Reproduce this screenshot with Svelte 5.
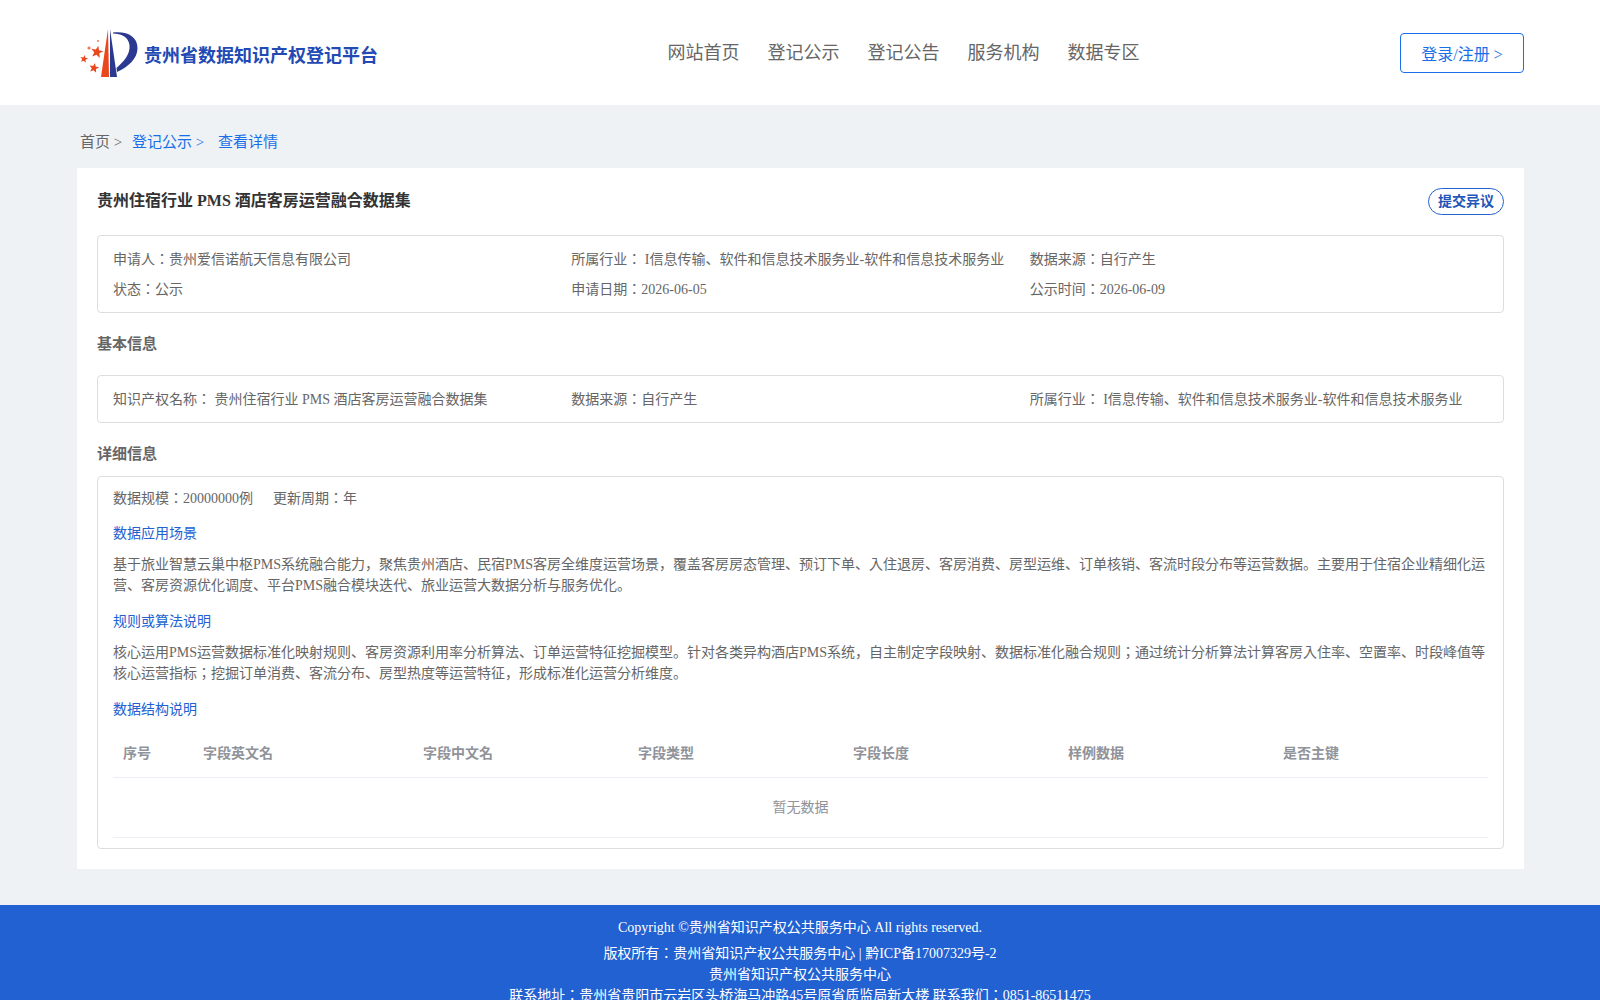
<script lang="ts">
  const navItems = ['网站首页', '登记公示', '登记公告', '服务机构', '数据专区'];
  const columns = [
    { label: '序号', width: 80 },
    { label: '字段英文名', width: 220 },
    { label: '字段中文名', width: 215 },
    { label: '字段类型', width: 215 },
    { label: '字段长度', width: 215 },
    { label: '样例数据', width: 215 },
    { label: '是否主键', width: 215 },
  ];
  const stars = [
    { x: 19, y: 25, r: 6.5 },
    { x: 6, y: 32, r: 4.2 },
    { x: 16, y: 41, r: 5.2 },
  ];

  function starPoints(cx: number, cy: number, r: number): string {
    const pts: string[] = [];
    for (let i = 0; i < 10; i++) {
      const rad = i % 2 === 0 ? r : r * 0.42;
      const a = -Math.PI / 2 + 0.2 + (i * Math.PI) / 5;
      pts.push(`${(cx + rad * Math.cos(a)).toFixed(2)},${(cy + rad * Math.sin(a)).toFixed(2)}`);
    }
    return pts.join(' ');
  }
</script>

<div class="page">
  <header class="header">
    <div class="logo">
      <svg class="logo-mark" viewBox="0 0 60 52" width="60" height="52" aria-hidden="true">
        <polygon points="30,2 31,50 23,50" fill="#e8481c" />
        <polygon points="32,2 39,50 32,50" fill="#2b3990" />
        <path d="M35 5.5 C50 4 59.5 10 59.5 21 C59.5 32 50 40 39 45 L38.5 41 C45 35 52.5 28 51.5 18 C50.5 10 43 6.5 35 6.5 Z" fill="#2b3990" />
        {#each stars as s}
          <polygon points={starPoints(s.x, s.y, s.r)} fill="#e8481c" />
        {/each}
        <circle cx="11" cy="21" r="1.6" fill="#ee7a50" />
        <circle cx="20" cy="14" r="1" fill="#ee7a50" />
      </svg>
      <span class="logo-text">贵州省数据知识产权登记平台</span>
    </div>
    <nav class="nav">
      {#each navItems as item}
        <span class="nav-item">{item}</span>
      {/each}
    </nav>
    <button class="login">登录/注册 &gt;</button>
  </header>

  <main class="main">
    <div class="crumbs">
      <span class="crumb-home">首页 &gt;</span>
      <span class="crumb-list">登记公示 &gt;</span>
      <span class="crumb-here">查看详情</span>
    </div>

    <section class="card">
      <div class="title-row">
        <h1 class="title">贵州住宿行业 PMS 酒店客房运营融合数据集</h1>
        <button class="objection">提交异议</button>
      </div>

      <div class="box summary">
        <span>申请人：贵州爱信诺航天信息有限公司</span>
        <span>所属行业： I信息传输、软件和信息技术服务业-软件和信息技术服务业</span>
        <span>数据来源：自行产生</span>
        <span>状态：公示</span>
        <span>申请日期：2026-06-05</span>
        <span>公示时间：2026-06-09</span>
      </div>

      <h2 class="section-head basic">基本信息</h2>
      <div class="box basic-box">
        <span>知识产权名称： 贵州住宿行业 PMS 酒店客房运营融合数据集</span>
        <span>数据来源：自行产生</span>
        <span>所属行业： I信息传输、软件和信息技术服务业-软件和信息技术服务业</span>
      </div>

      <h2 class="section-head detail">详细信息</h2>
      <div class="box detail-box">
        <div class="meta">
          <span>数据规模：20000000例</span>
          <span>更新周期：年</span>
        </div>
        <h3 class="sub-head">数据应用场景</h3>
        <p class="para">基于旅业智慧云巢中枢PMS系统融合能力，聚焦贵州酒店、民宿PMS客房全维度运营场景，覆盖客房房态管理、预订下单、入住退房、客房消费、房型运维、订单核销、客流时段分布等运营数据。主要用于住宿企业精细化运营、客房资源优化调度、平台PMS融合模块迭代、旅业运营大数据分析与服务优化。</p>
        <h3 class="sub-head">规则或算法说明</h3>
        <p class="para">核心运用PMS运营数据标准化映射规则、客房资源利用率分析算法、订单运营特征挖掘模型。针对各类异构酒店PMS系统，自主制定字段映射、数据标准化融合规则；通过统计分析算法计算客房入住率、空置率、时段峰值等核心运营指标；挖掘订单消费、客流分布、房型热度等运营特征，形成标准化运营分析维度。</p>
        <h3 class="sub-head">数据结构说明</h3>
        <table class="fields">
          <colgroup>
            {#each columns as col}
              <col style="width: {col.width}px" />
            {/each}
          </colgroup>
          <thead>
            <tr>
              {#each columns as col}
                <th>{col.label}</th>
              {/each}
            </tr>
          </thead>
          <tbody>
            <tr>
              <td class="empty" colspan={columns.length}>暂无数据</td>
            </tr>
          </tbody>
        </table>
      </div>
    </section>
  </main>

  <footer class="footer">
    <p class="copyright">Copyright ©贵州省知识产权公共服务中心 All rights reserved.</p>
    <p>版权所有：贵州省知识产权公共服务中心 | 黔ICP备17007329号-2</p>
    <p>贵州省知识产权公共服务中心</p>
    <p>联系地址：贵州省贵阳市云岩区头桥海马冲路45号原省质监局新大楼 联系我们：0851-86511475</p>
  </footer>
</div>

<style>
:global(body) {
  margin: 0;
  background: #eff2f5;
}

.page {
  height: 1000px;
  overflow: hidden;
  font-family: "Liberation Serif", "Noto Sans CJK JP", serif;
  font-size: 14px;
  line-height: 21px;
  color: #666;
}

.header {
  height: 105px;
  background: #fff;
  padding: 0 76px 0 80px;
  display: flex;
  align-items: center;
  justify-content: space-between;
  box-sizing: border-box;
}

.logo {
  display: flex;
  align-items: center;
  gap: 6px;
  width: 340px;
}

.logo-mark {
  flex: none;
  margin: 0 0 0 -2px;
}

.logo-text {
  font-family: "Noto Sans CJK SC", sans-serif;
  font-size: 18px;
  font-weight: 700;
  color: #2349b4;
  margin-top: 3px;
}

.nav {
  display: flex;
  gap: 28px;
  margin-left: -13px;
  padding-bottom: 4px;
}

.nav-item {
  font-family: "Noto Sans CJK SC", sans-serif;
  font-size: 18px;
  line-height: 24px;
  color: #666;
}

.login {
  width: 124px;
  height: 40px;
  background: #fff;
  border: 1px solid #1a6fe8;
  border-radius: 4px;
  color: #1a6fe8;
  font-family: inherit;
  font-size: 16px;
  padding: 0;
}

.main {
  padding: 0 76px 36px 77px;
}

.crumbs {
  height: 63px;
  display: flex;
  align-items: center;
  font-size: 15px;
  padding: 12px 0 0 3px;
  box-sizing: border-box;
  color: #1a6fe8;
}

.crumb-home {
  color: #666;
  width: 52px;
}

.crumb-list {
  width: 86px;
}

.card {
  background: #fff;
  padding: 20px;
  height: 701px;
  box-sizing: border-box;
}

.title-row {
  display: flex;
  justify-content: space-between;
  align-items: flex-start;
  height: 47px;
}

.title {
  margin: 1px 0 0;
  font-size: 16px;
  line-height: 24px;
  font-weight: 700;
  color: #333;
}

.objection {
  width: 76px;
  height: 27px;
  padding: 0 0 3px;
  background: #fff;
  border: 1px solid #2161d1;
  border-radius: 14px;
  color: #2255b8;
  font-family: inherit;
  font-size: 14px;
  font-weight: 700;
}

.box {
  border: 1px solid #ddd;
  border-radius: 4px;
  padding: 0 15px;
  box-sizing: border-box;
}

.summary,
.basic-box {
  display: grid;
  grid-template-columns: repeat(3, 1fr);
  align-items: center;
  align-content: center;
}

.summary {
  height: 78px;
  row-gap: 9px;
}

.basic-box {
  height: 48px;
}

.section-head {
  margin: 0;
  font-size: 15px;
  line-height: 22px;
  font-weight: 700;
  color: #666;
}

.basic {
  padding: 20px 0 20px;
}

.detail {
  padding: 20px 0 11px;
}

.detail-box {
  height: 373px;
  padding-top: 11px;
}

.meta {
  display: flex;
  gap: 20px;
}

.sub-head {
  margin: 14px 0 0;
  font-size: 14px;
  line-height: 21px;
  font-weight: 400;
  color: #2161d1;
}

.para + .sub-head {
  margin-top: 15px;
}

.para {
  margin: 10px 0 0;
}

.fields {
  width: 100%;
  margin-top: 10px;
  border-collapse: collapse;
  table-layout: fixed;
}

.fields th {
  height: 47px;
  padding: 0 10px;
  text-align: left;
  font-weight: 700;
  color: #909399;
  border-bottom: 1px solid #ebeef5;
}

.fields td {
  height: 59px;
  padding: 0 10px;
  border-bottom: 1px solid #ebeef5;
}

.empty {
  text-align: center;
  color: #909399;
}

.footer {
  background: #2161d1;
  color: #fff;
  text-align: center;
  padding-top: 12px;
}

.footer p {
  margin: 0;
}

.footer .copyright {
  margin-bottom: 5px;
}
</style>
